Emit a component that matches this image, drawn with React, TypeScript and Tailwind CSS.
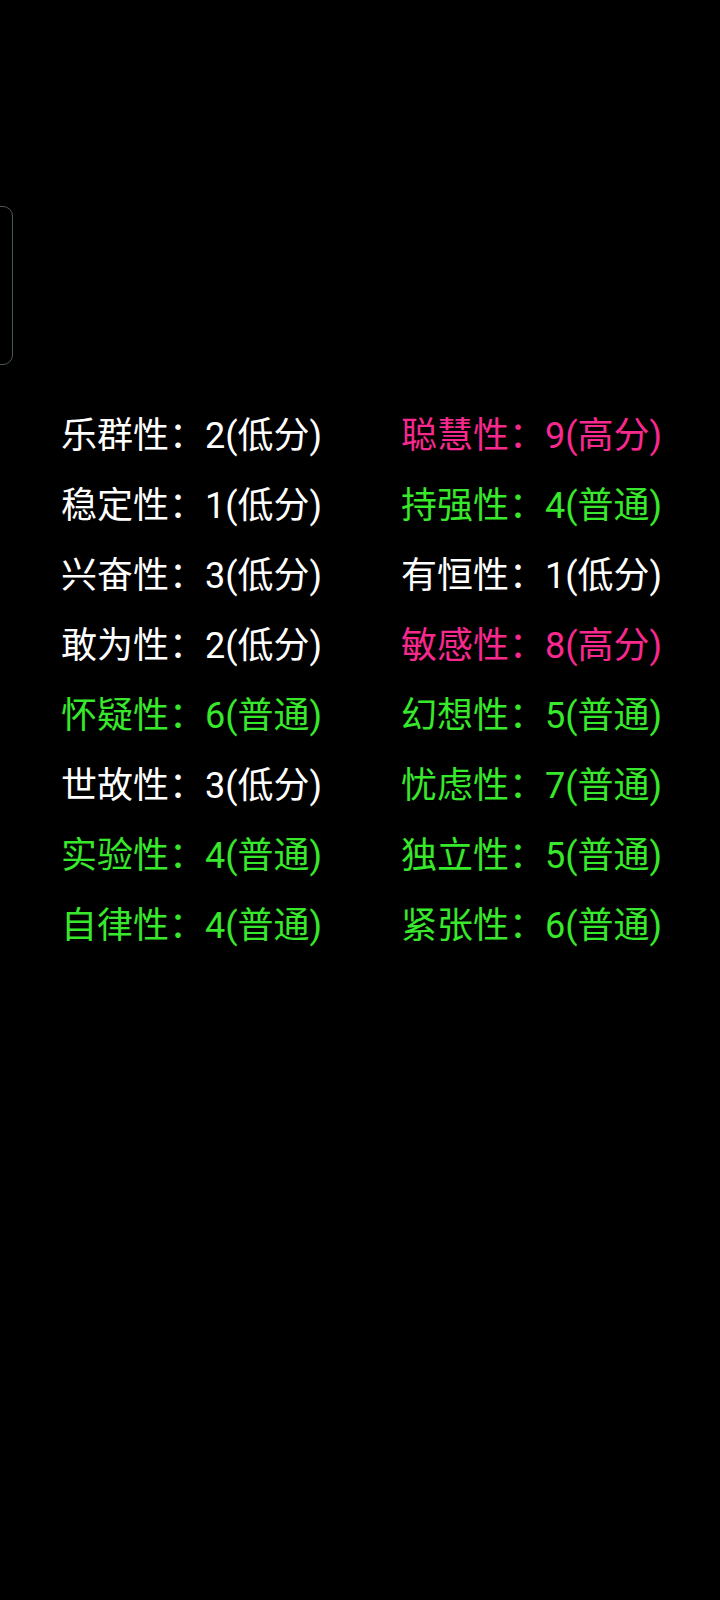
import React from "react";

type Item = { label: string; value: string; color: "w" | "p" | "g" };

const left: Item[] = [
  { label: "乐群性", value: "2(低分)", color: "w" },
  { label: "稳定性", value: "1(低分)", color: "w" },
  { label: "兴奋性", value: "3(低分)", color: "w" },
  { label: "敢为性", value: "2(低分)", color: "w" },
  { label: "怀疑性", value: "6(普通)", color: "g" },
  { label: "世故性", value: "3(低分)", color: "w" },
  { label: "实验性", value: "4(普通)", color: "g" },
  { label: "自律性", value: "4(普通)", color: "g" },
];

const right: Item[] = [
  { label: "聪慧性", value: "9(高分)", color: "p" },
  { label: "持强性", value: "4(普通)", color: "g" },
  { label: "有恒性", value: "1(低分)", color: "w" },
  { label: "敏感性", value: "8(高分)", color: "p" },
  { label: "幻想性", value: "5(普通)", color: "g" },
  { label: "忧虑性", value: "7(普通)", color: "g" },
  { label: "独立性", value: "5(普通)", color: "g" },
  { label: "紧张性", value: "6(普通)", color: "g" },
];

function cls(c: Item["color"]) {
  if (c === "p") return "text-[#f7288e]";
  if (c === "g") return "text-[#38e82c]";
  return "text-white";
}

export default function App() {
  const rows = left.map((l, i) => [l, right[i]] as const);
  return (
    <div
      className="relative w-[720px] h-[1600px] bg-black overflow-hidden"
      style={{ fontFamily: 'Roboto, "Noto Sans CJK SC", sans-serif' }}
    >
      <div className="absolute left-[-20px] top-[206px] w-[33px] h-[159px] rounded-[10px] border border-[#4a5a4a]" />
      <div className="pt-[401px] pl-[61px] grid grid-cols-[340px_1fr]">
        {rows.map(([l, r], i) => (
          <React.Fragment key={i}>
            <div className={`h-[70px] leading-[70px] text-[36px] whitespace-nowrap ${cls(l.color)}`}>
              {l.label}：{l.value}
            </div>
            <div className={`h-[70px] leading-[70px] text-[36px] whitespace-nowrap ${cls(r.color)}`}>
              {r.label}：{r.value}
            </div>
          </React.Fragment>
        ))}
      </div>
    </div>
  );
}
